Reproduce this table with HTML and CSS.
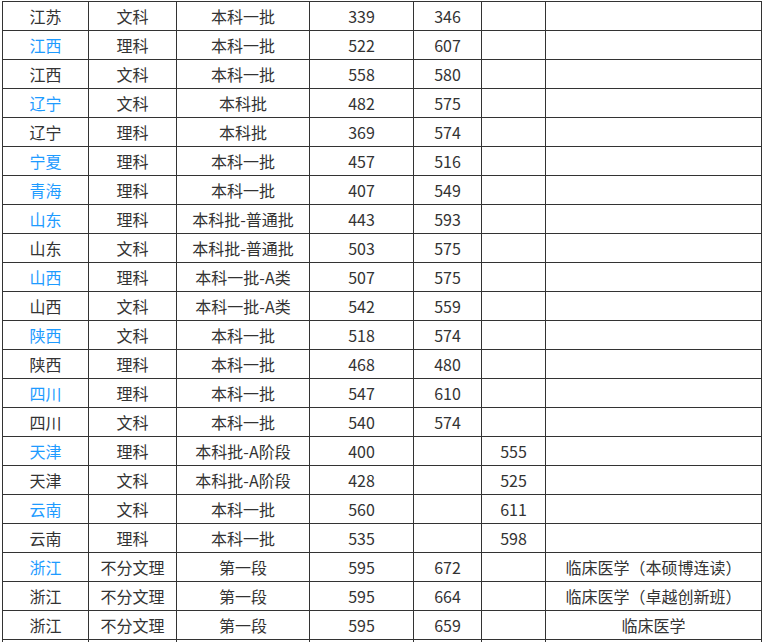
FILE: index.html
```html
<!DOCTYPE html>
<html lang="zh-CN">
<head>
<meta charset="utf-8">
<title>录取分数</title>
<link rel="stylesheet" href="styles.css">
</head>
<body>
<table class="scores">
<colgroup>
<col class="c1"><col class="c2"><col class="c3"><col class="c4"><col class="c5"><col class="c6"><col class="c7">
</colgroup>
<tbody>
<tr><td>江苏</td><td>文科</td><td>本科一批</td><td>339</td><td>346</td><td></td><td></td></tr>
<tr><td class="link">江西</td><td>理科</td><td>本科一批</td><td>522</td><td>607</td><td></td><td></td></tr>
<tr><td>江西</td><td>文科</td><td>本科一批</td><td>558</td><td>580</td><td></td><td></td></tr>
<tr><td class="link">辽宁</td><td>文科</td><td>本科批</td><td>482</td><td>575</td><td></td><td></td></tr>
<tr><td>辽宁</td><td>理科</td><td>本科批</td><td>369</td><td>574</td><td></td><td></td></tr>
<tr><td class="link">宁夏</td><td>理科</td><td>本科一批</td><td>457</td><td>516</td><td></td><td></td></tr>
<tr><td class="link">青海</td><td>理科</td><td>本科一批</td><td>407</td><td>549</td><td></td><td></td></tr>
<tr><td class="link">山东</td><td>理科</td><td>本科批-普通批</td><td>443</td><td>593</td><td></td><td></td></tr>
<tr><td>山东</td><td>文科</td><td>本科批-普通批</td><td>503</td><td>575</td><td></td><td></td></tr>
<tr><td class="link">山西</td><td>理科</td><td>本科一批-A类</td><td>507</td><td>575</td><td></td><td></td></tr>
<tr><td>山西</td><td>文科</td><td>本科一批-A类</td><td>542</td><td>559</td><td></td><td></td></tr>
<tr><td class="link">陕西</td><td>文科</td><td>本科一批</td><td>518</td><td>574</td><td></td><td></td></tr>
<tr><td>陕西</td><td>理科</td><td>本科一批</td><td>468</td><td>480</td><td></td><td></td></tr>
<tr><td class="link">四川</td><td>理科</td><td>本科一批</td><td>547</td><td>610</td><td></td><td></td></tr>
<tr><td>四川</td><td>文科</td><td>本科一批</td><td>540</td><td>574</td><td></td><td></td></tr>
<tr><td class="link">天津</td><td>理科</td><td>本科批-A阶段</td><td>400</td><td></td><td>555</td><td></td></tr>
<tr><td>天津</td><td>文科</td><td>本科批-A阶段</td><td>428</td><td></td><td>525</td><td></td></tr>
<tr><td class="link">云南</td><td>文科</td><td>本科一批</td><td>560</td><td></td><td>611</td><td></td></tr>
<tr><td>云南</td><td>理科</td><td>本科一批</td><td>535</td><td></td><td>598</td><td></td></tr>
<tr><td class="link">浙江</td><td>不分文理</td><td>第一段</td><td>595</td><td>672</td><td></td><td>临床医学（本硕博连读）</td></tr>
<tr><td>浙江</td><td>不分文理</td><td>第一段</td><td>595</td><td>664</td><td></td><td>临床医学（卓越创新班）</td></tr>
<tr><td>浙江</td><td>不分文理</td><td>第一段</td><td>595</td><td>659</td><td></td><td>临床医学</td></tr>
<tr><td></td><td></td><td></td><td></td><td></td><td></td><td></td></tr>
</tbody>
</table>
</body>
</html>
```

FILE: styles.css
```css
html, body {
  margin: 0;
  padding: 0;
  background: #fff;
}
body {
  padding: 1px 0 0 2px;
  overflow: hidden;
  height: 642px;
  box-sizing: border-box;
}
.scores {
  border-collapse: collapse;
  table-layout: fixed;
  width: 760px;
  font-family: "Noto Sans CJK SC", "Noto Sans", sans-serif;
  font-size: 16px;
  color: #333;
}
.c1 { width: 86px; }
.c2 { width: 88px; }
.c3 { width: 133px; }
.c4 { width: 104px; }
.c5 { width: 68px; }
.c6 { width: 64px; }
.c7 { width: 216px; }
.scores td {
  border: 1px solid #333;
  height: 28px;
  padding: 0;
  text-align: center;
  vertical-align: middle;
  line-height: 20px;
  white-space: nowrap;
}
.scores td.link {
  color: #1e9bff;
}
```
